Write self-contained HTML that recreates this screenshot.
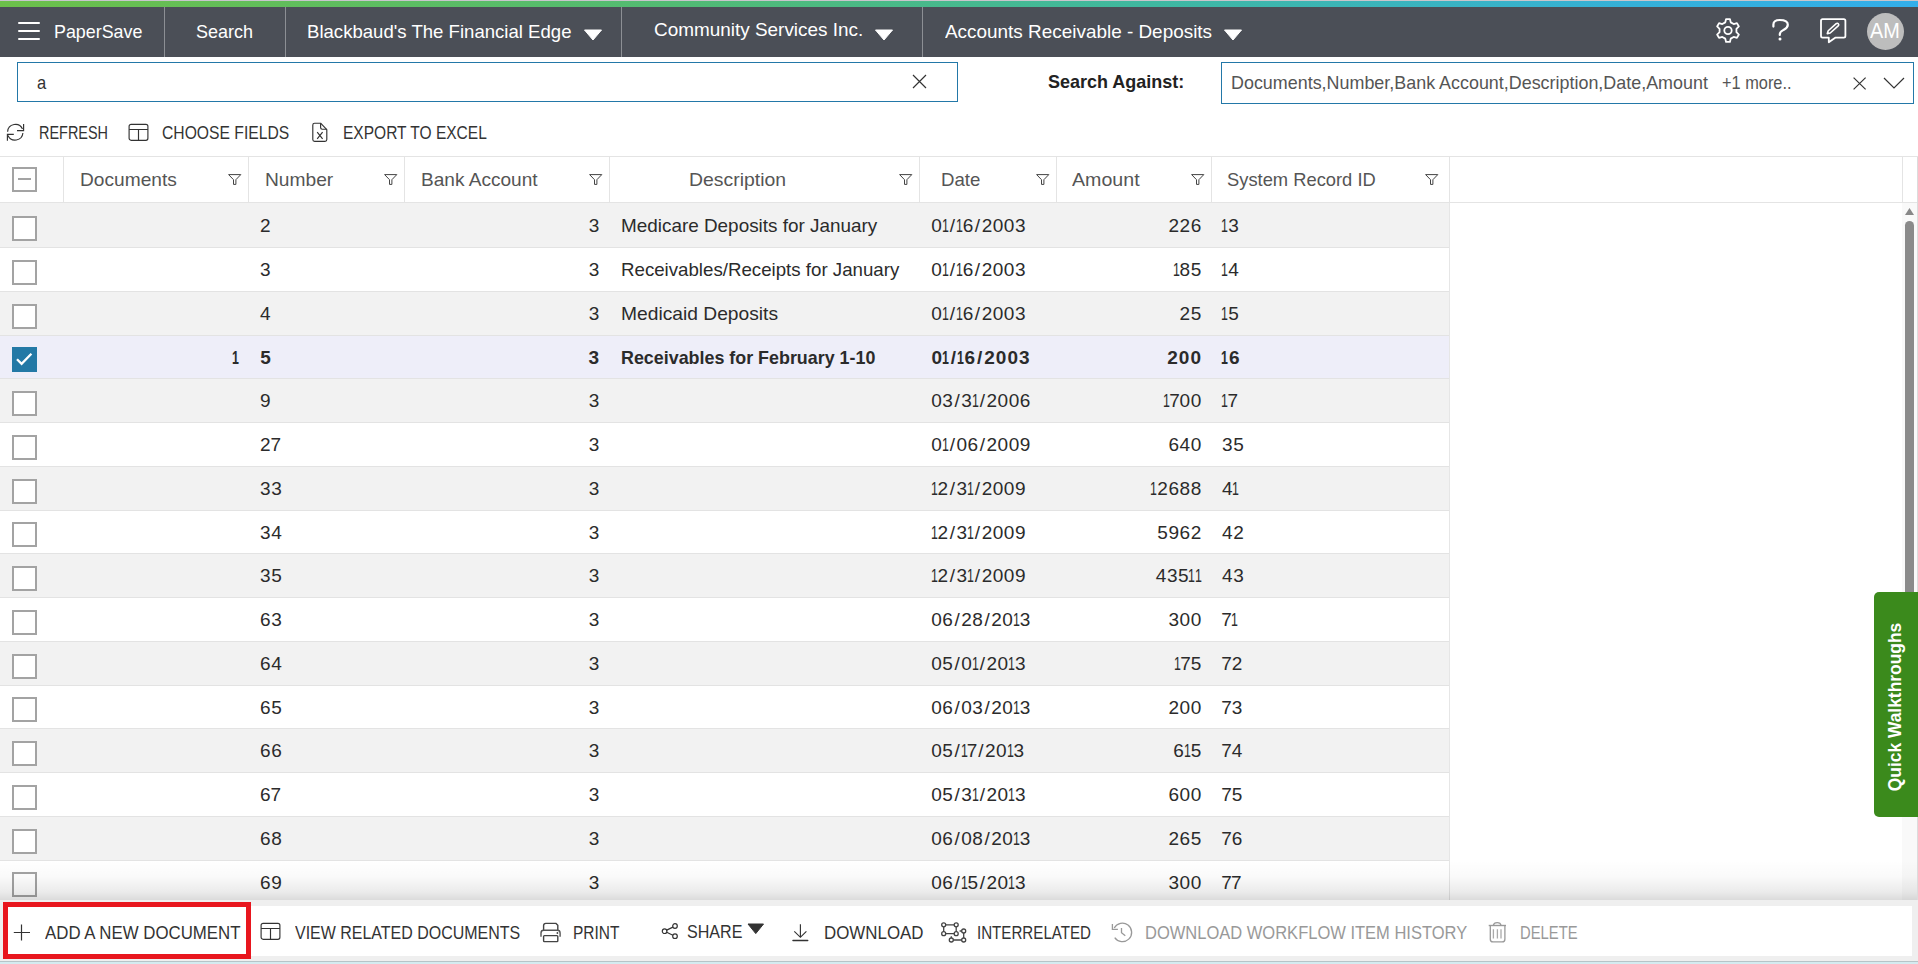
<!DOCTYPE html>
<html><head><meta charset="utf-8"><title>PaperSave</title>
<style>
html,body{margin:0;padding:0;width:1918px;height:964px;overflow:hidden;background:#fff;font-family:"Liberation Sans",sans-serif;}
.t{position:absolute;white-space:nowrap;transform-origin:0 0;}
svg{overflow:visible}
</style></head><body>
<div style="position:absolute;left:0px;top:0px;width:1918px;height:1px;background:#c8c6cc"></div>
<div style="position:absolute;left:0px;top:1px;width:1918px;height:6px;background:linear-gradient(90deg,#6cc04a 0%,#52bb73 35%,#3fb8a0 60%,#35b0d8 85%,#33aeea 100%)"></div>
<div style="position:absolute;left:0px;top:7px;width:1918px;height:50px;background:#4b4f57"></div>
<div style="position:absolute;left:164px;top:7px;width:1px;height:50px;background:#8c8f94"></div>
<div style="position:absolute;left:285px;top:7px;width:1px;height:50px;background:#8c8f94"></div>
<div style="position:absolute;left:621px;top:7px;width:1px;height:50px;background:#8c8f94"></div>
<div style="position:absolute;left:922px;top:7px;width:1px;height:50px;background:#8c8f94"></div>
<div style="position:absolute;left:18px;top:21.5px;width:22px;height:2px;background:#fff;border-radius:1px"></div>
<div style="position:absolute;left:18px;top:29.5px;width:22px;height:2px;background:#fff;border-radius:1px"></div>
<div style="position:absolute;left:18px;top:37.5px;width:22px;height:2px;background:#fff;border-radius:1px"></div>
<div class="t" style="left:53.60px;top:22px;font-size:19px;line-height:19px;color:#ffffff;transform:scaleX(0.9406);">PaperSave</div>
<div class="t" style="left:196.00px;top:22px;font-size:19px;line-height:19px;color:#ffffff;transform:scaleX(0.9470);">Search</div>
<div class="t" style="left:307.30px;top:22px;font-size:19px;line-height:19px;color:#ffffff;transform:scaleX(0.9777);">Blackbaud's The Financial Edge</div>
<div class="t" style="left:653.75px;top:20px;font-size:19px;line-height:19px;color:#ffffff;transform:scaleX(0.9960);">Community Services Inc.</div>
<div class="t" style="left:945.00px;top:22px;font-size:19px;line-height:19px;color:#ffffff;transform:scaleX(0.9956);">Accounts Receivable - Deposits</div>
<svg style="position:absolute;left:583.75px;top:29px;" width="18" height="12" viewBox="0 0 18 12"><path d="M0.5 1 L17.5 1 L9 11 Z" fill="#fff" stroke="#fff" stroke-width="1" stroke-linejoin="round"/></svg>
<svg style="position:absolute;left:875px;top:29px;" width="18" height="12" viewBox="0 0 18 12"><path d="M0.5 1 L17.5 1 L9 11 Z" fill="#fff" stroke="#fff" stroke-width="1" stroke-linejoin="round"/></svg>
<svg style="position:absolute;left:1224px;top:29px;" width="18" height="12" viewBox="0 0 18 12"><path d="M0.5 1 L17.5 1 L9 11 Z" fill="#fff" stroke="#fff" stroke-width="1" stroke-linejoin="round"/></svg>
<svg style="position:absolute;left:1712px;top:14px;" width="32" height="34" viewBox="0 0 32 34"><path d="M13.26 8.35 L14.07 5.06 L17.93 5.06 L18.74 8.35 L21.69 10.05 L24.94 9.11 L26.87 12.46 L24.43 14.80 L24.43 18.20 L26.87 20.54 L24.94 23.89 L21.69 22.95 L18.74 24.65 L17.93 27.94 L14.07 27.94 L13.26 24.65 L10.31 22.95 L7.06 23.89 L5.13 20.54 L7.57 18.20 L7.57 14.80 L5.13 12.46 L7.06 9.11 L10.31 10.05 Z" fill="none" stroke="#fff" stroke-width="1.8" stroke-linejoin="round"/><circle cx="16" cy="16.5" r="3.7" fill="none" stroke="#fff" stroke-width="1.8"/></svg>
<svg style="position:absolute;left:1766px;top:14px;" width="28" height="32" viewBox="0 0 28 32"><path d="M7.4 12.6 V10.5 C7.4 7.2 9.5 6 13.8 6 C18.5 6 21.8 7.5 21.8 10.8 C21.8 14 19.5 14.8 16.8 16.4 C14.6 17.6 13.8 18.4 13.8 20.2 V21" fill="none" stroke="#fff" stroke-width="2.2" stroke-linecap="round"/><circle cx="14" cy="25" r="1.5" fill="#fff"/></svg>
<svg style="position:absolute;left:1816px;top:14px;" width="34" height="32" viewBox="0 0 34 32"><path d="M6.6 5.2 H27.8 Q29.4 5.2 29.4 6.8 V22.1 Q29.4 23.7 27.8 23.7 H19.2 L12.8 28.3 V23.7 H6.6 Q5 23.7 5 22.1 V6.8 Q5 5.2 6.6 5.2 Z" fill="none" stroke="#fff" stroke-width="1.8" stroke-linejoin="round"/><path d="M11.3 19.6 L12.23 16.74 L20.2 9.58 A1.5 1.5 0 0 1 22.2 11.82 L14.23 18.98 Z" fill="none" stroke="#fff" stroke-width="1.6" stroke-linejoin="round"/></svg>
<div style="position:absolute;left:1867px;top:12.8px;width:37px;height:37px;background:#bdbdbd;border-radius:50%"></div>
<div class="t" style="left:1870.20px;top:20px;font-size:22px;line-height:22px;color:#ffffff;transform:scaleX(0.9030);">AM</div>
<div style="position:absolute;left:17px;top:62px;width:941px;height:40px;box-sizing:border-box;border:1.5px solid #2378a8;background:#fff"></div>
<div class="t" style="left:37.20px;top:73px;font-size:19px;line-height:19px;color:#333;transform:scaleX(0.8710);">a</div>
<svg style="position:absolute;left:911px;top:73px;" width="17" height="17" viewBox="0 0 17 17"><path d="M2 2 L15 15 M15 2 L2 15" stroke="#333" stroke-width="1.2"/></svg>
<div class="t" style="left:1047.50px;top:72px;font-size:19px;line-height:19px;color:#222;font-weight:bold;transform:scaleX(0.9462);">Search Against:</div>
<div style="position:absolute;left:1221px;top:62px;width:693px;height:42px;box-sizing:border-box;border:1.5px solid #2378a8;background:#fff"></div>
<div class="t" style="left:1230.60px;top:72.8px;font-size:19px;line-height:19px;color:#555;transform:scaleX(0.9427);">Documents,Number,Bank Account,Description,Date,Amount</div>
<div class="t" style="left:1722.00px;top:72.8px;font-size:19px;line-height:19px;color:#555;transform:scaleX(0.8603);">+1 more..</div>
<svg style="position:absolute;left:1852px;top:76px;" width="16" height="15" viewBox="0 0 16 15"><path d="M1.6 1.6 L13.6 13.4 M13.6 1.6 L1.6 13.4" stroke="#333" stroke-width="1.2"/></svg>
<svg style="position:absolute;left:1882px;top:76px;" width="24" height="14" viewBox="0 0 24 14"><path d="M2 2 L12 12 L22 2" fill="none" stroke="#333" stroke-width="1.2"/></svg>
<svg style="position:absolute;left:4px;top:120px;" width="24" height="24" viewBox="0 0 24 24"><path d="M3.6 11.7 A7.8 7.8 0 0 1 18.5 9" fill="none" stroke="#333" stroke-width="1.15"/><path d="M19.6 4 V10.6 H13" fill="none" stroke="#333" stroke-width="1.15"/><path d="M18.9 13 A7.8 7.8 0 0 1 4 15.4" fill="none" stroke="#333" stroke-width="1.15"/><path d="M3.4 20.8 V14.4 H9.8" fill="none" stroke="#333" stroke-width="1.15"/></svg>
<div class="t" style="left:39.00px;top:123px;font-size:19px;line-height:19px;color:#333;transform:scaleX(0.7601);">REFRESH</div>
<svg style="position:absolute;left:128px;top:123px;" width="24" height="20" viewBox="0 0 24 20"><rect x="1.1" y="1.3" width="18.8" height="16" rx="2" fill="none" stroke="#333" stroke-width="1.15"/><path d="M1.1 6.5 H19.9 M10.5 6.5 V17.3" stroke="#333" stroke-width="1.15"/></svg>
<div class="t" style="left:161.50px;top:123px;font-size:19px;line-height:19px;color:#333;transform:scaleX(0.8252);">CHOOSE FIELDS</div>
<svg style="position:absolute;left:310px;top:121px;" width="20" height="24" viewBox="0 0 20 24"><path d="M4.6 2.2 H10.6 L16.8 8.6 V18.6 Q16.8 20.4 15 20.4 H4.6 Q2.8 20.4 2.8 18.6 V4 Q2.8 2.2 4.6 2.2 Z" fill="none" stroke="#333" stroke-width="1.15" stroke-linejoin="round"/><path d="M10.6 2.2 V6.6 Q10.6 8.2 12.2 8.2 H16.8" fill="none" stroke="#333" stroke-width="1.15"/><path d="M7.2 11.2 L12.6 17.8 M12.6 11.2 L7.2 17.8" stroke="#333" stroke-width="1.2"/></svg>
<div class="t" style="left:342.70px;top:123px;font-size:19px;line-height:19px;color:#333;transform:scaleX(0.8170);">EXPORT TO EXCEL</div>
<div style="position:absolute;left:0px;top:156px;width:1918px;height:1px;background:#e4e4e4"></div>
<div style="position:absolute;left:0px;top:157px;width:1918px;height:45px;background:#fff"></div>
<div style="position:absolute;left:0px;top:202px;width:1918px;height:1px;background:#e4e4e4"></div>
<div style="position:absolute;left:63px;top:157px;width:1px;height:45px;background:#e4e4e4"></div>
<div style="position:absolute;left:248px;top:157px;width:1px;height:45px;background:#e4e4e4"></div>
<div style="position:absolute;left:404px;top:157px;width:1px;height:45px;background:#e4e4e4"></div>
<div style="position:absolute;left:609px;top:157px;width:1px;height:45px;background:#e4e4e4"></div>
<div style="position:absolute;left:919px;top:157px;width:1px;height:45px;background:#e4e4e4"></div>
<div style="position:absolute;left:1056px;top:157px;width:1px;height:45px;background:#e4e4e4"></div>
<div style="position:absolute;left:1211px;top:157px;width:1px;height:45px;background:#e4e4e4"></div>
<div style="position:absolute;left:1449px;top:157px;width:1px;height:45px;background:#e4e4e4"></div>
<div style="position:absolute;left:1902px;top:157px;width:1px;height:45px;background:#e4e4e4"></div>
<div style="position:absolute;left:1917px;top:157px;width:1px;height:743px;background:#dcdcdc"></div>
<div style="position:absolute;left:12px;top:167px;width:25px;height:25px;box-sizing:border-box;border:2px solid #a3a3a3;background:#fff"></div>
<div style="position:absolute;left:18px;top:178px;width:13px;height:2px;background:#a3a3a3"></div>
<div class="t" style="left:80.20px;top:170px;font-size:19px;line-height:19px;color:#555;transform:scaleX(1.0075);">Documents</div>
<div class="t" style="left:265.00px;top:170px;font-size:19px;line-height:19px;color:#555;transform:scaleX(1.0094);">Number</div>
<div class="t" style="left:421.40px;top:170px;font-size:19px;line-height:19px;color:#555;transform:scaleX(1.0037);">Bank Account</div>
<div class="t" style="left:688.60px;top:170px;font-size:19px;line-height:19px;color:#555;transform:scaleX(1.0209);">Description</div>
<div class="t" style="left:940.60px;top:170px;font-size:19px;line-height:19px;color:#555;transform:scaleX(0.9819);">Date</div>
<div class="t" style="left:1072.00px;top:170px;font-size:19px;line-height:19px;color:#555;transform:scaleX(1.0326);">Amount</div>
<div class="t" style="left:1226.60px;top:170px;font-size:19px;line-height:19px;color:#555;transform:scaleX(0.9647);">System Record ID</div>
<svg style="position:absolute;left:227.6px;top:172px;" width="14" height="14" viewBox="0 0 14 14"><path d="M0.6 2.6 H12.8 L7.9 7.7 V12.4 H5.5 V7.7 Z" fill="none" stroke="#444" stroke-width="1" stroke-linejoin="miter"/></svg>
<svg style="position:absolute;left:383.9px;top:172px;" width="14" height="14" viewBox="0 0 14 14"><path d="M0.6 2.6 H12.8 L7.9 7.7 V12.4 H5.5 V7.7 Z" fill="none" stroke="#444" stroke-width="1" stroke-linejoin="miter"/></svg>
<svg style="position:absolute;left:588.7px;top:172px;" width="14" height="14" viewBox="0 0 14 14"><path d="M0.6 2.6 H12.8 L7.9 7.7 V12.4 H5.5 V7.7 Z" fill="none" stroke="#444" stroke-width="1" stroke-linejoin="miter"/></svg>
<svg style="position:absolute;left:899px;top:172px;" width="14" height="14" viewBox="0 0 14 14"><path d="M0.6 2.6 H12.8 L7.9 7.7 V12.4 H5.5 V7.7 Z" fill="none" stroke="#444" stroke-width="1" stroke-linejoin="miter"/></svg>
<svg style="position:absolute;left:1035.5px;top:172px;" width="14" height="14" viewBox="0 0 14 14"><path d="M0.6 2.6 H12.8 L7.9 7.7 V12.4 H5.5 V7.7 Z" fill="none" stroke="#444" stroke-width="1" stroke-linejoin="miter"/></svg>
<svg style="position:absolute;left:1190.6px;top:172px;" width="14" height="14" viewBox="0 0 14 14"><path d="M0.6 2.6 H12.8 L7.9 7.7 V12.4 H5.5 V7.7 Z" fill="none" stroke="#444" stroke-width="1" stroke-linejoin="miter"/></svg>
<svg style="position:absolute;left:1425px;top:172px;" width="14" height="14" viewBox="0 0 14 14"><path d="M0.6 2.6 H12.8 L7.9 7.7 V12.4 H5.5 V7.7 Z" fill="none" stroke="#444" stroke-width="1" stroke-linejoin="miter"/></svg>
<div style="position:absolute;left:1449px;top:203px;width:453px;height:697px;background:#fff"></div>
<div style="position:absolute;left:1449px;top:203px;width:1px;height:697px;background:#e6e6e6"></div>
<div style="position:absolute;left:1902px;top:203px;width:15px;height:697px;background:#f9f9f9"></div>
<div style="position:absolute;left:0px;top:203px;width:1449px;height:44px;background:#f2f2f2"></div>
<div style="position:absolute;left:0px;top:247px;width:1449px;height:1px;background:#e3e3e3"></div>
<div style="position:absolute;left:12px;top:216px;width:25px;height:25px;box-sizing:border-box;border:2px solid #a3a3a3;background:#fff"></div>
<div class="t" style="left:259.80px;top:216.0px;font-size:19px;line-height:19px;color:#2b2b2b;"><span style="position:absolute;left:0.27px;top:0;">2</span></div>
<div class="t" style="left:588.40px;top:216.0px;font-size:19px;line-height:19px;color:#2b2b2b;"><span style="position:absolute;left:0.27px;top:0;">3</span></div>
<div class="t" style="left:620.80px;top:216.0px;font-size:19px;line-height:19px;color:#2b2b2b;transform:scaleX(0.9945);">Medicare Deposits for January</div>
<div class="t" style="left:931.00px;top:216.0px;font-size:19px;line-height:19px;color:#2b2b2b;"><span style="position:absolute;left:0.27px;top:0;">0</span><span style="position:absolute;left:8.70px;top:0;transform:scaleX(0.65);transform-origin:5.55px 0;">1</span><span style="position:absolute;left:18.66px;top:0;">/</span><span style="position:absolute;left:22.80px;top:0;transform:scaleX(0.65);transform-origin:5.55px 0;">1</span><span style="position:absolute;left:31.77px;top:0;">6</span><span style="position:absolute;left:43.86px;top:0;">/</span><span style="position:absolute;left:50.67px;top:0;">2</span><span style="position:absolute;left:61.77px;top:0;">0</span><span style="position:absolute;left:72.87px;top:0;">0</span><span style="position:absolute;left:83.97px;top:0;">3</span></div>
<div class="t" style="left:1168.20px;top:216.0px;font-size:19px;line-height:19px;color:#2b2b2b;"><span style="position:absolute;left:0.27px;top:0;">2</span><span style="position:absolute;left:11.37px;top:0;">2</span><span style="position:absolute;left:22.47px;top:0;">6</span></div>
<div class="t" style="left:1221.80px;top:216.0px;font-size:19px;line-height:19px;color:#2b2b2b;"><span style="position:absolute;left:-2.40px;top:0;transform:scaleX(0.65);transform-origin:5.55px 0;">1</span><span style="position:absolute;left:6.57px;top:0;">3</span></div>
<div style="position:absolute;left:0px;top:248px;width:1449px;height:43px;background:#ffffff"></div>
<div style="position:absolute;left:0px;top:291px;width:1449px;height:1px;background:#e3e3e3"></div>
<div style="position:absolute;left:12px;top:260px;width:25px;height:25px;box-sizing:border-box;border:2px solid #a3a3a3;background:#fff"></div>
<div class="t" style="left:259.80px;top:260.0px;font-size:19px;line-height:19px;color:#2b2b2b;"><span style="position:absolute;left:0.27px;top:0;">3</span></div>
<div class="t" style="left:588.40px;top:260.0px;font-size:19px;line-height:19px;color:#2b2b2b;"><span style="position:absolute;left:0.27px;top:0;">3</span></div>
<div class="t" style="left:620.80px;top:260.0px;font-size:19px;line-height:19px;color:#2b2b2b;transform:scaleX(0.9831);">Receivables/Receipts for January</div>
<div class="t" style="left:931.00px;top:260.0px;font-size:19px;line-height:19px;color:#2b2b2b;"><span style="position:absolute;left:0.27px;top:0;">0</span><span style="position:absolute;left:8.70px;top:0;transform:scaleX(0.65);transform-origin:5.55px 0;">1</span><span style="position:absolute;left:18.66px;top:0;">/</span><span style="position:absolute;left:22.80px;top:0;transform:scaleX(0.65);transform-origin:5.55px 0;">1</span><span style="position:absolute;left:31.77px;top:0;">6</span><span style="position:absolute;left:43.86px;top:0;">/</span><span style="position:absolute;left:50.67px;top:0;">2</span><span style="position:absolute;left:61.77px;top:0;">0</span><span style="position:absolute;left:72.87px;top:0;">0</span><span style="position:absolute;left:83.97px;top:0;">3</span></div>
<div class="t" style="left:1173.00px;top:260.0px;font-size:19px;line-height:19px;color:#2b2b2b;"><span style="position:absolute;left:-2.40px;top:0;transform:scaleX(0.65);transform-origin:5.55px 0;">1</span><span style="position:absolute;left:6.57px;top:0;">8</span><span style="position:absolute;left:17.67px;top:0;">5</span></div>
<div class="t" style="left:1221.80px;top:260.0px;font-size:19px;line-height:19px;color:#2b2b2b;"><span style="position:absolute;left:-2.40px;top:0;transform:scaleX(0.65);transform-origin:5.55px 0;">1</span><span style="position:absolute;left:6.57px;top:0;">4</span></div>
<div style="position:absolute;left:0px;top:292px;width:1449px;height:43px;background:#f2f2f2"></div>
<div style="position:absolute;left:0px;top:335px;width:1449px;height:1px;background:#e3e3e3"></div>
<div style="position:absolute;left:12px;top:304px;width:25px;height:25px;box-sizing:border-box;border:2px solid #a3a3a3;background:#fff"></div>
<div class="t" style="left:259.80px;top:304.0px;font-size:19px;line-height:19px;color:#2b2b2b;"><span style="position:absolute;left:0.27px;top:0;">4</span></div>
<div class="t" style="left:588.40px;top:304.0px;font-size:19px;line-height:19px;color:#2b2b2b;"><span style="position:absolute;left:0.27px;top:0;">3</span></div>
<div class="t" style="left:620.80px;top:304.0px;font-size:19px;line-height:19px;color:#2b2b2b;transform:scaleX(1.0116);">Medicaid Deposits</div>
<div class="t" style="left:931.00px;top:304.0px;font-size:19px;line-height:19px;color:#2b2b2b;"><span style="position:absolute;left:0.27px;top:0;">0</span><span style="position:absolute;left:8.70px;top:0;transform:scaleX(0.65);transform-origin:5.55px 0;">1</span><span style="position:absolute;left:18.66px;top:0;">/</span><span style="position:absolute;left:22.80px;top:0;transform:scaleX(0.65);transform-origin:5.55px 0;">1</span><span style="position:absolute;left:31.77px;top:0;">6</span><span style="position:absolute;left:43.86px;top:0;">/</span><span style="position:absolute;left:50.67px;top:0;">2</span><span style="position:absolute;left:61.77px;top:0;">0</span><span style="position:absolute;left:72.87px;top:0;">0</span><span style="position:absolute;left:83.97px;top:0;">3</span></div>
<div class="t" style="left:1179.30px;top:304.0px;font-size:19px;line-height:19px;color:#2b2b2b;"><span style="position:absolute;left:0.27px;top:0;">2</span><span style="position:absolute;left:11.37px;top:0;">5</span></div>
<div class="t" style="left:1221.80px;top:304.0px;font-size:19px;line-height:19px;color:#2b2b2b;"><span style="position:absolute;left:-2.40px;top:0;transform:scaleX(0.65);transform-origin:5.55px 0;">1</span><span style="position:absolute;left:6.57px;top:0;">5</span></div>
<div style="position:absolute;left:0px;top:336px;width:1449px;height:42px;background:#eeeef9"></div>
<div style="position:absolute;left:0px;top:378px;width:1449px;height:1px;background:#e3e3e3"></div>
<div style="position:absolute;left:12px;top:347px;width:25px;height:25px;background:#2379a6"></div>
<svg style="position:absolute;left:12px;top:347px;" width="25" height="25" viewBox="0 0 25 25"><path d="M5 12.2 L9.6 16.8 L19.4 6.8" fill="none" stroke="#fff" stroke-width="2.3"/></svg>
<div class="t" style="left:231.91px;top:347.5px;font-size:19px;line-height:19px;color:#2b2b2b;font-weight:bold;"><span style="position:absolute;left:-2.33px;top:0;transform:scaleX(0.65);transform-origin:5.62px 0;">1</span></div>
<div class="t" style="left:259.80px;top:347.5px;font-size:19px;line-height:19px;color:#2b2b2b;font-weight:bold;"><span style="position:absolute;left:0.53px;top:0;">5</span></div>
<div class="t" style="left:587.89px;top:347.5px;font-size:19px;line-height:19px;color:#2b2b2b;font-weight:bold;"><span style="position:absolute;left:0.53px;top:0;">3</span></div>
<div class="t" style="left:620.80px;top:347.5px;font-size:19px;line-height:19px;color:#2b2b2b;font-weight:bold;transform:scaleX(0.9408);">Receivables for February 1-10</div>
<div class="t" style="left:931.00px;top:347.5px;font-size:19px;line-height:19px;color:#2b2b2b;font-weight:bold;"><span style="position:absolute;left:0.53px;top:0;">0</span><span style="position:absolute;left:9.29px;top:0;transform:scaleX(0.65);transform-origin:5.62px 0;">1</span><span style="position:absolute;left:19.64px;top:0;">/</span><span style="position:absolute;left:24.03px;top:0;transform:scaleX(0.65);transform-origin:5.62px 0;">1</span><span style="position:absolute;left:33.47px;top:0;">6</span><span style="position:absolute;left:46.00px;top:0;">/</span><span style="position:absolute;left:53.24px;top:0;">2</span><span style="position:absolute;left:64.85px;top:0;">0</span><span style="position:absolute;left:76.46px;top:0;">0</span><span style="position:absolute;left:88.08px;top:0;">3</span></div>
<div class="t" style="left:1166.67px;top:347.5px;font-size:19px;line-height:19px;color:#2b2b2b;font-weight:bold;"><span style="position:absolute;left:0.53px;top:0;">2</span><span style="position:absolute;left:12.14px;top:0;">0</span><span style="position:absolute;left:23.75px;top:0;">0</span></div>
<div class="t" style="left:1221.80px;top:347.5px;font-size:19px;line-height:19px;color:#2b2b2b;font-weight:bold;"><span style="position:absolute;left:-2.33px;top:0;transform:scaleX(0.65);transform-origin:5.62px 0;">1</span><span style="position:absolute;left:7.12px;top:0;">6</span></div>
<div style="position:absolute;left:0px;top:379px;width:1449px;height:43px;background:#f2f2f2"></div>
<div style="position:absolute;left:0px;top:422px;width:1449px;height:1px;background:#e3e3e3"></div>
<div style="position:absolute;left:12px;top:391px;width:25px;height:25px;box-sizing:border-box;border:2px solid #a3a3a3;background:#fff"></div>
<div class="t" style="left:259.80px;top:391.0px;font-size:19px;line-height:19px;color:#2b2b2b;"><span style="position:absolute;left:0.27px;top:0;">9</span></div>
<div class="t" style="left:588.40px;top:391.0px;font-size:19px;line-height:19px;color:#2b2b2b;"><span style="position:absolute;left:0.27px;top:0;">3</span></div>
<div class="t" style="left:931.00px;top:391.0px;font-size:19px;line-height:19px;color:#2b2b2b;"><span style="position:absolute;left:0.27px;top:0;">0</span><span style="position:absolute;left:11.37px;top:0;">3</span><span style="position:absolute;left:23.46px;top:0;">/</span><span style="position:absolute;left:30.27px;top:0;">3</span><span style="position:absolute;left:38.70px;top:0;transform:scaleX(0.65);transform-origin:5.55px 0;">1</span><span style="position:absolute;left:48.66px;top:0;">/</span><span style="position:absolute;left:55.47px;top:0;">2</span><span style="position:absolute;left:66.57px;top:0;">0</span><span style="position:absolute;left:77.67px;top:0;">0</span><span style="position:absolute;left:88.77px;top:0;">6</span></div>
<div class="t" style="left:1163.40px;top:391.0px;font-size:19px;line-height:19px;color:#2b2b2b;"><span style="position:absolute;left:-2.40px;top:0;transform:scaleX(0.65);transform-origin:5.55px 0;">1</span><span style="position:absolute;left:5.82px;top:0;">7</span><span style="position:absolute;left:16.17px;top:0;">0</span><span style="position:absolute;left:27.27px;top:0;">0</span></div>
<div class="t" style="left:1221.80px;top:391.0px;font-size:19px;line-height:19px;color:#2b2b2b;"><span style="position:absolute;left:-2.40px;top:0;transform:scaleX(0.65);transform-origin:5.55px 0;">1</span><span style="position:absolute;left:5.82px;top:0;">7</span></div>
<div style="position:absolute;left:0px;top:423px;width:1449px;height:43px;background:#ffffff"></div>
<div style="position:absolute;left:0px;top:466px;width:1449px;height:1px;background:#e3e3e3"></div>
<div style="position:absolute;left:12px;top:435px;width:25px;height:25px;box-sizing:border-box;border:2px solid #a3a3a3;background:#fff"></div>
<div class="t" style="left:259.80px;top:435.0px;font-size:19px;line-height:19px;color:#2b2b2b;"><span style="position:absolute;left:0.27px;top:0;">2</span><span style="position:absolute;left:10.62px;top:0;">7</span></div>
<div class="t" style="left:588.40px;top:435.0px;font-size:19px;line-height:19px;color:#2b2b2b;"><span style="position:absolute;left:0.27px;top:0;">3</span></div>
<div class="t" style="left:931.00px;top:435.0px;font-size:19px;line-height:19px;color:#2b2b2b;"><span style="position:absolute;left:0.27px;top:0;">0</span><span style="position:absolute;left:8.70px;top:0;transform:scaleX(0.65);transform-origin:5.55px 0;">1</span><span style="position:absolute;left:18.66px;top:0;">/</span><span style="position:absolute;left:25.47px;top:0;">0</span><span style="position:absolute;left:36.57px;top:0;">6</span><span style="position:absolute;left:48.66px;top:0;">/</span><span style="position:absolute;left:55.47px;top:0;">2</span><span style="position:absolute;left:66.57px;top:0;">0</span><span style="position:absolute;left:77.67px;top:0;">0</span><span style="position:absolute;left:88.77px;top:0;">9</span></div>
<div class="t" style="left:1168.20px;top:435.0px;font-size:19px;line-height:19px;color:#2b2b2b;"><span style="position:absolute;left:0.27px;top:0;">6</span><span style="position:absolute;left:11.37px;top:0;">4</span><span style="position:absolute;left:22.47px;top:0;">0</span></div>
<div class="t" style="left:1221.80px;top:435.0px;font-size:19px;line-height:19px;color:#2b2b2b;"><span style="position:absolute;left:0.27px;top:0;">3</span><span style="position:absolute;left:11.37px;top:0;">5</span></div>
<div style="position:absolute;left:0px;top:467px;width:1449px;height:43px;background:#f2f2f2"></div>
<div style="position:absolute;left:0px;top:510px;width:1449px;height:1px;background:#e3e3e3"></div>
<div style="position:absolute;left:12px;top:479px;width:25px;height:25px;box-sizing:border-box;border:2px solid #a3a3a3;background:#fff"></div>
<div class="t" style="left:259.80px;top:479.0px;font-size:19px;line-height:19px;color:#2b2b2b;"><span style="position:absolute;left:0.27px;top:0;">3</span><span style="position:absolute;left:11.37px;top:0;">3</span></div>
<div class="t" style="left:588.40px;top:479.0px;font-size:19px;line-height:19px;color:#2b2b2b;"><span style="position:absolute;left:0.27px;top:0;">3</span></div>
<div class="t" style="left:931.00px;top:479.0px;font-size:19px;line-height:19px;color:#2b2b2b;"><span style="position:absolute;left:-2.40px;top:0;transform:scaleX(0.65);transform-origin:5.55px 0;">1</span><span style="position:absolute;left:6.57px;top:0;">2</span><span style="position:absolute;left:18.66px;top:0;">/</span><span style="position:absolute;left:25.47px;top:0;">3</span><span style="position:absolute;left:33.90px;top:0;transform:scaleX(0.65);transform-origin:5.55px 0;">1</span><span style="position:absolute;left:43.86px;top:0;">/</span><span style="position:absolute;left:50.67px;top:0;">2</span><span style="position:absolute;left:61.77px;top:0;">0</span><span style="position:absolute;left:72.87px;top:0;">0</span><span style="position:absolute;left:83.97px;top:0;">9</span></div>
<div class="t" style="left:1150.80px;top:479.0px;font-size:19px;line-height:19px;color:#2b2b2b;"><span style="position:absolute;left:-2.40px;top:0;transform:scaleX(0.65);transform-origin:5.55px 0;">1</span><span style="position:absolute;left:6.57px;top:0;">2</span><span style="position:absolute;left:17.67px;top:0;">6</span><span style="position:absolute;left:28.77px;top:0;">8</span><span style="position:absolute;left:39.87px;top:0;">8</span></div>
<div class="t" style="left:1221.80px;top:479.0px;font-size:19px;line-height:19px;color:#2b2b2b;"><span style="position:absolute;left:0.27px;top:0;">4</span><span style="position:absolute;left:8.70px;top:0;transform:scaleX(0.65);transform-origin:5.55px 0;">1</span></div>
<div style="position:absolute;left:0px;top:511px;width:1449px;height:42px;background:#ffffff"></div>
<div style="position:absolute;left:0px;top:553px;width:1449px;height:1px;background:#e3e3e3"></div>
<div style="position:absolute;left:12px;top:522px;width:25px;height:25px;box-sizing:border-box;border:2px solid #a3a3a3;background:#fff"></div>
<div class="t" style="left:259.80px;top:522.5px;font-size:19px;line-height:19px;color:#2b2b2b;"><span style="position:absolute;left:0.27px;top:0;">3</span><span style="position:absolute;left:11.37px;top:0;">4</span></div>
<div class="t" style="left:588.40px;top:522.5px;font-size:19px;line-height:19px;color:#2b2b2b;"><span style="position:absolute;left:0.27px;top:0;">3</span></div>
<div class="t" style="left:931.00px;top:522.5px;font-size:19px;line-height:19px;color:#2b2b2b;"><span style="position:absolute;left:-2.40px;top:0;transform:scaleX(0.65);transform-origin:5.55px 0;">1</span><span style="position:absolute;left:6.57px;top:0;">2</span><span style="position:absolute;left:18.66px;top:0;">/</span><span style="position:absolute;left:25.47px;top:0;">3</span><span style="position:absolute;left:33.90px;top:0;transform:scaleX(0.65);transform-origin:5.55px 0;">1</span><span style="position:absolute;left:43.86px;top:0;">/</span><span style="position:absolute;left:50.67px;top:0;">2</span><span style="position:absolute;left:61.77px;top:0;">0</span><span style="position:absolute;left:72.87px;top:0;">0</span><span style="position:absolute;left:83.97px;top:0;">9</span></div>
<div class="t" style="left:1157.10px;top:522.5px;font-size:19px;line-height:19px;color:#2b2b2b;"><span style="position:absolute;left:0.27px;top:0;">5</span><span style="position:absolute;left:11.37px;top:0;">9</span><span style="position:absolute;left:22.47px;top:0;">6</span><span style="position:absolute;left:33.57px;top:0;">2</span></div>
<div class="t" style="left:1221.80px;top:522.5px;font-size:19px;line-height:19px;color:#2b2b2b;"><span style="position:absolute;left:0.27px;top:0;">4</span><span style="position:absolute;left:11.37px;top:0;">2</span></div>
<div style="position:absolute;left:0px;top:554px;width:1449px;height:43px;background:#f2f2f2"></div>
<div style="position:absolute;left:0px;top:597px;width:1449px;height:1px;background:#e3e3e3"></div>
<div style="position:absolute;left:12px;top:566px;width:25px;height:25px;box-sizing:border-box;border:2px solid #a3a3a3;background:#fff"></div>
<div class="t" style="left:259.80px;top:566.0px;font-size:19px;line-height:19px;color:#2b2b2b;"><span style="position:absolute;left:0.27px;top:0;">3</span><span style="position:absolute;left:11.37px;top:0;">5</span></div>
<div class="t" style="left:588.40px;top:566.0px;font-size:19px;line-height:19px;color:#2b2b2b;"><span style="position:absolute;left:0.27px;top:0;">3</span></div>
<div class="t" style="left:931.00px;top:566.0px;font-size:19px;line-height:19px;color:#2b2b2b;"><span style="position:absolute;left:-2.40px;top:0;transform:scaleX(0.65);transform-origin:5.55px 0;">1</span><span style="position:absolute;left:6.57px;top:0;">2</span><span style="position:absolute;left:18.66px;top:0;">/</span><span style="position:absolute;left:25.47px;top:0;">3</span><span style="position:absolute;left:33.90px;top:0;transform:scaleX(0.65);transform-origin:5.55px 0;">1</span><span style="position:absolute;left:43.86px;top:0;">/</span><span style="position:absolute;left:50.67px;top:0;">2</span><span style="position:absolute;left:61.77px;top:0;">0</span><span style="position:absolute;left:72.87px;top:0;">0</span><span style="position:absolute;left:83.97px;top:0;">9</span></div>
<div class="t" style="left:1155.60px;top:566.0px;font-size:19px;line-height:19px;color:#2b2b2b;"><span style="position:absolute;left:0.27px;top:0;">4</span><span style="position:absolute;left:11.37px;top:0;">3</span><span style="position:absolute;left:22.47px;top:0;">5</span><span style="position:absolute;left:30.90px;top:0;transform:scaleX(0.65);transform-origin:5.55px 0;">1</span><span style="position:absolute;left:37.20px;top:0;transform:scaleX(0.65);transform-origin:5.55px 0;">1</span></div>
<div class="t" style="left:1221.80px;top:566.0px;font-size:19px;line-height:19px;color:#2b2b2b;"><span style="position:absolute;left:0.27px;top:0;">4</span><span style="position:absolute;left:11.37px;top:0;">3</span></div>
<div style="position:absolute;left:0px;top:598px;width:1449px;height:43px;background:#ffffff"></div>
<div style="position:absolute;left:0px;top:641px;width:1449px;height:1px;background:#e3e3e3"></div>
<div style="position:absolute;left:12px;top:610px;width:25px;height:25px;box-sizing:border-box;border:2px solid #a3a3a3;background:#fff"></div>
<div class="t" style="left:259.80px;top:610.0px;font-size:19px;line-height:19px;color:#2b2b2b;"><span style="position:absolute;left:0.27px;top:0;">6</span><span style="position:absolute;left:11.37px;top:0;">3</span></div>
<div class="t" style="left:588.40px;top:610.0px;font-size:19px;line-height:19px;color:#2b2b2b;"><span style="position:absolute;left:0.27px;top:0;">3</span></div>
<div class="t" style="left:931.00px;top:610.0px;font-size:19px;line-height:19px;color:#2b2b2b;"><span style="position:absolute;left:0.27px;top:0;">0</span><span style="position:absolute;left:11.37px;top:0;">6</span><span style="position:absolute;left:23.46px;top:0;">/</span><span style="position:absolute;left:30.27px;top:0;">2</span><span style="position:absolute;left:41.37px;top:0;">8</span><span style="position:absolute;left:53.46px;top:0;">/</span><span style="position:absolute;left:60.27px;top:0;">2</span><span style="position:absolute;left:71.37px;top:0;">0</span><span style="position:absolute;left:79.80px;top:0;transform:scaleX(0.65);transform-origin:5.55px 0;">1</span><span style="position:absolute;left:88.77px;top:0;">3</span></div>
<div class="t" style="left:1168.20px;top:610.0px;font-size:19px;line-height:19px;color:#2b2b2b;"><span style="position:absolute;left:0.27px;top:0;">3</span><span style="position:absolute;left:11.37px;top:0;">0</span><span style="position:absolute;left:22.47px;top:0;">0</span></div>
<div class="t" style="left:1221.80px;top:610.0px;font-size:19px;line-height:19px;color:#2b2b2b;"><span style="position:absolute;left:-0.48px;top:0;">7</span><span style="position:absolute;left:7.20px;top:0;transform:scaleX(0.65);transform-origin:5.55px 0;">1</span></div>
<div style="position:absolute;left:0px;top:642px;width:1449px;height:43px;background:#f2f2f2"></div>
<div style="position:absolute;left:0px;top:685px;width:1449px;height:1px;background:#e3e3e3"></div>
<div style="position:absolute;left:12px;top:654px;width:25px;height:25px;box-sizing:border-box;border:2px solid #a3a3a3;background:#fff"></div>
<div class="t" style="left:259.80px;top:654.0px;font-size:19px;line-height:19px;color:#2b2b2b;"><span style="position:absolute;left:0.27px;top:0;">6</span><span style="position:absolute;left:11.37px;top:0;">4</span></div>
<div class="t" style="left:588.40px;top:654.0px;font-size:19px;line-height:19px;color:#2b2b2b;"><span style="position:absolute;left:0.27px;top:0;">3</span></div>
<div class="t" style="left:931.00px;top:654.0px;font-size:19px;line-height:19px;color:#2b2b2b;"><span style="position:absolute;left:0.27px;top:0;">0</span><span style="position:absolute;left:11.37px;top:0;">5</span><span style="position:absolute;left:23.46px;top:0;">/</span><span style="position:absolute;left:30.27px;top:0;">0</span><span style="position:absolute;left:38.70px;top:0;transform:scaleX(0.65);transform-origin:5.55px 0;">1</span><span style="position:absolute;left:48.66px;top:0;">/</span><span style="position:absolute;left:55.47px;top:0;">2</span><span style="position:absolute;left:66.57px;top:0;">0</span><span style="position:absolute;left:75.00px;top:0;transform:scaleX(0.65);transform-origin:5.55px 0;">1</span><span style="position:absolute;left:83.97px;top:0;">3</span></div>
<div class="t" style="left:1174.50px;top:654.0px;font-size:19px;line-height:19px;color:#2b2b2b;"><span style="position:absolute;left:-2.40px;top:0;transform:scaleX(0.65);transform-origin:5.55px 0;">1</span><span style="position:absolute;left:5.82px;top:0;">7</span><span style="position:absolute;left:16.17px;top:0;">5</span></div>
<div class="t" style="left:1221.80px;top:654.0px;font-size:19px;line-height:19px;color:#2b2b2b;"><span style="position:absolute;left:-0.48px;top:0;">7</span><span style="position:absolute;left:9.87px;top:0;">2</span></div>
<div style="position:absolute;left:0px;top:686px;width:1449px;height:42px;background:#ffffff"></div>
<div style="position:absolute;left:0px;top:728px;width:1449px;height:1px;background:#e3e3e3"></div>
<div style="position:absolute;left:12px;top:697px;width:25px;height:25px;box-sizing:border-box;border:2px solid #a3a3a3;background:#fff"></div>
<div class="t" style="left:259.80px;top:697.5px;font-size:19px;line-height:19px;color:#2b2b2b;"><span style="position:absolute;left:0.27px;top:0;">6</span><span style="position:absolute;left:11.37px;top:0;">5</span></div>
<div class="t" style="left:588.40px;top:697.5px;font-size:19px;line-height:19px;color:#2b2b2b;"><span style="position:absolute;left:0.27px;top:0;">3</span></div>
<div class="t" style="left:931.00px;top:697.5px;font-size:19px;line-height:19px;color:#2b2b2b;"><span style="position:absolute;left:0.27px;top:0;">0</span><span style="position:absolute;left:11.37px;top:0;">6</span><span style="position:absolute;left:23.46px;top:0;">/</span><span style="position:absolute;left:30.27px;top:0;">0</span><span style="position:absolute;left:41.37px;top:0;">3</span><span style="position:absolute;left:53.46px;top:0;">/</span><span style="position:absolute;left:60.27px;top:0;">2</span><span style="position:absolute;left:71.37px;top:0;">0</span><span style="position:absolute;left:79.80px;top:0;transform:scaleX(0.65);transform-origin:5.55px 0;">1</span><span style="position:absolute;left:88.77px;top:0;">3</span></div>
<div class="t" style="left:1168.20px;top:697.5px;font-size:19px;line-height:19px;color:#2b2b2b;"><span style="position:absolute;left:0.27px;top:0;">2</span><span style="position:absolute;left:11.37px;top:0;">0</span><span style="position:absolute;left:22.47px;top:0;">0</span></div>
<div class="t" style="left:1221.80px;top:697.5px;font-size:19px;line-height:19px;color:#2b2b2b;"><span style="position:absolute;left:-0.48px;top:0;">7</span><span style="position:absolute;left:9.87px;top:0;">3</span></div>
<div style="position:absolute;left:0px;top:729px;width:1449px;height:43px;background:#f2f2f2"></div>
<div style="position:absolute;left:0px;top:772px;width:1449px;height:1px;background:#e3e3e3"></div>
<div style="position:absolute;left:12px;top:741px;width:25px;height:25px;box-sizing:border-box;border:2px solid #a3a3a3;background:#fff"></div>
<div class="t" style="left:259.80px;top:741.0px;font-size:19px;line-height:19px;color:#2b2b2b;"><span style="position:absolute;left:0.27px;top:0;">6</span><span style="position:absolute;left:11.37px;top:0;">6</span></div>
<div class="t" style="left:588.40px;top:741.0px;font-size:19px;line-height:19px;color:#2b2b2b;"><span style="position:absolute;left:0.27px;top:0;">3</span></div>
<div class="t" style="left:931.00px;top:741.0px;font-size:19px;line-height:19px;color:#2b2b2b;"><span style="position:absolute;left:0.27px;top:0;">0</span><span style="position:absolute;left:11.37px;top:0;">5</span><span style="position:absolute;left:23.46px;top:0;">/</span><span style="position:absolute;left:27.60px;top:0;transform:scaleX(0.65);transform-origin:5.55px 0;">1</span><span style="position:absolute;left:35.82px;top:0;">7</span><span style="position:absolute;left:47.16px;top:0;">/</span><span style="position:absolute;left:53.97px;top:0;">2</span><span style="position:absolute;left:65.07px;top:0;">0</span><span style="position:absolute;left:73.50px;top:0;transform:scaleX(0.65);transform-origin:5.55px 0;">1</span><span style="position:absolute;left:82.47px;top:0;">3</span></div>
<div class="t" style="left:1173.00px;top:741.0px;font-size:19px;line-height:19px;color:#2b2b2b;"><span style="position:absolute;left:0.27px;top:0;">6</span><span style="position:absolute;left:8.70px;top:0;transform:scaleX(0.65);transform-origin:5.55px 0;">1</span><span style="position:absolute;left:17.67px;top:0;">5</span></div>
<div class="t" style="left:1221.80px;top:741.0px;font-size:19px;line-height:19px;color:#2b2b2b;"><span style="position:absolute;left:-0.48px;top:0;">7</span><span style="position:absolute;left:9.87px;top:0;">4</span></div>
<div style="position:absolute;left:0px;top:773px;width:1449px;height:43px;background:#ffffff"></div>
<div style="position:absolute;left:0px;top:816px;width:1449px;height:1px;background:#e3e3e3"></div>
<div style="position:absolute;left:12px;top:785px;width:25px;height:25px;box-sizing:border-box;border:2px solid #a3a3a3;background:#fff"></div>
<div class="t" style="left:259.80px;top:785.0px;font-size:19px;line-height:19px;color:#2b2b2b;"><span style="position:absolute;left:0.27px;top:0;">6</span><span style="position:absolute;left:10.62px;top:0;">7</span></div>
<div class="t" style="left:588.40px;top:785.0px;font-size:19px;line-height:19px;color:#2b2b2b;"><span style="position:absolute;left:0.27px;top:0;">3</span></div>
<div class="t" style="left:931.00px;top:785.0px;font-size:19px;line-height:19px;color:#2b2b2b;"><span style="position:absolute;left:0.27px;top:0;">0</span><span style="position:absolute;left:11.37px;top:0;">5</span><span style="position:absolute;left:23.46px;top:0;">/</span><span style="position:absolute;left:30.27px;top:0;">3</span><span style="position:absolute;left:38.70px;top:0;transform:scaleX(0.65);transform-origin:5.55px 0;">1</span><span style="position:absolute;left:48.66px;top:0;">/</span><span style="position:absolute;left:55.47px;top:0;">2</span><span style="position:absolute;left:66.57px;top:0;">0</span><span style="position:absolute;left:75.00px;top:0;transform:scaleX(0.65);transform-origin:5.55px 0;">1</span><span style="position:absolute;left:83.97px;top:0;">3</span></div>
<div class="t" style="left:1168.20px;top:785.0px;font-size:19px;line-height:19px;color:#2b2b2b;"><span style="position:absolute;left:0.27px;top:0;">6</span><span style="position:absolute;left:11.37px;top:0;">0</span><span style="position:absolute;left:22.47px;top:0;">0</span></div>
<div class="t" style="left:1221.80px;top:785.0px;font-size:19px;line-height:19px;color:#2b2b2b;"><span style="position:absolute;left:-0.48px;top:0;">7</span><span style="position:absolute;left:9.87px;top:0;">5</span></div>
<div style="position:absolute;left:0px;top:817px;width:1449px;height:43px;background:#f2f2f2"></div>
<div style="position:absolute;left:0px;top:860px;width:1449px;height:1px;background:#e3e3e3"></div>
<div style="position:absolute;left:12px;top:829px;width:25px;height:25px;box-sizing:border-box;border:2px solid #a3a3a3;background:#fff"></div>
<div class="t" style="left:259.80px;top:829.0px;font-size:19px;line-height:19px;color:#2b2b2b;"><span style="position:absolute;left:0.27px;top:0;">6</span><span style="position:absolute;left:11.37px;top:0;">8</span></div>
<div class="t" style="left:588.40px;top:829.0px;font-size:19px;line-height:19px;color:#2b2b2b;"><span style="position:absolute;left:0.27px;top:0;">3</span></div>
<div class="t" style="left:931.00px;top:829.0px;font-size:19px;line-height:19px;color:#2b2b2b;"><span style="position:absolute;left:0.27px;top:0;">0</span><span style="position:absolute;left:11.37px;top:0;">6</span><span style="position:absolute;left:23.46px;top:0;">/</span><span style="position:absolute;left:30.27px;top:0;">0</span><span style="position:absolute;left:41.37px;top:0;">8</span><span style="position:absolute;left:53.46px;top:0;">/</span><span style="position:absolute;left:60.27px;top:0;">2</span><span style="position:absolute;left:71.37px;top:0;">0</span><span style="position:absolute;left:79.80px;top:0;transform:scaleX(0.65);transform-origin:5.55px 0;">1</span><span style="position:absolute;left:88.77px;top:0;">3</span></div>
<div class="t" style="left:1168.20px;top:829.0px;font-size:19px;line-height:19px;color:#2b2b2b;"><span style="position:absolute;left:0.27px;top:0;">2</span><span style="position:absolute;left:11.37px;top:0;">6</span><span style="position:absolute;left:22.47px;top:0;">5</span></div>
<div class="t" style="left:1221.80px;top:829.0px;font-size:19px;line-height:19px;color:#2b2b2b;"><span style="position:absolute;left:-0.48px;top:0;">7</span><span style="position:absolute;left:9.87px;top:0;">6</span></div>
<div style="position:absolute;left:0px;top:861px;width:1449px;height:39px;background:#ffffff"></div>
<div style="position:absolute;left:12px;top:872px;width:25px;height:25px;box-sizing:border-box;border:2px solid #a3a3a3;background:#fff"></div>
<div class="t" style="left:259.80px;top:872.5px;font-size:19px;line-height:19px;color:#2b2b2b;"><span style="position:absolute;left:0.27px;top:0;">6</span><span style="position:absolute;left:11.37px;top:0;">9</span></div>
<div class="t" style="left:588.40px;top:872.5px;font-size:19px;line-height:19px;color:#2b2b2b;"><span style="position:absolute;left:0.27px;top:0;">3</span></div>
<div class="t" style="left:931.00px;top:872.5px;font-size:19px;line-height:19px;color:#2b2b2b;"><span style="position:absolute;left:0.27px;top:0;">0</span><span style="position:absolute;left:11.37px;top:0;">6</span><span style="position:absolute;left:23.46px;top:0;">/</span><span style="position:absolute;left:27.60px;top:0;transform:scaleX(0.65);transform-origin:5.55px 0;">1</span><span style="position:absolute;left:36.57px;top:0;">5</span><span style="position:absolute;left:48.66px;top:0;">/</span><span style="position:absolute;left:55.47px;top:0;">2</span><span style="position:absolute;left:66.57px;top:0;">0</span><span style="position:absolute;left:75.00px;top:0;transform:scaleX(0.65);transform-origin:5.55px 0;">1</span><span style="position:absolute;left:83.97px;top:0;">3</span></div>
<div class="t" style="left:1168.20px;top:872.5px;font-size:19px;line-height:19px;color:#2b2b2b;"><span style="position:absolute;left:0.27px;top:0;">3</span><span style="position:absolute;left:11.37px;top:0;">0</span><span style="position:absolute;left:22.47px;top:0;">0</span></div>
<div class="t" style="left:1221.80px;top:872.5px;font-size:19px;line-height:19px;color:#2b2b2b;"><span style="position:absolute;left:-0.48px;top:0;">7</span><span style="position:absolute;left:9.12px;top:0;">7</span></div>
<div style="position:absolute;left:0px;top:860px;width:1917px;height:40px;background:linear-gradient(180deg,rgba(0,0,0,0) 0%,rgba(0,0,0,0.02) 40%,rgba(0,0,0,0.08) 80%,rgba(0,0,0,0.14) 100%)"></div>
<svg style="position:absolute;left:1904px;top:206px;" width="12" height="10" viewBox="0 0 12 10"><path d="M1 9 L5.5 2 L10 9 Z" fill="#888"/></svg>
<div style="position:absolute;left:1905px;top:220.5px;width:9px;height:500px;background:#8a8a8a;border-radius:4.5px"></div>
<div style="position:absolute;left:1874px;top:592px;width:44px;height:225px;background:#3b8a1c;border-radius:5px 0 0 5px"></div>
<div class="t" style="left:1894.5px;top:707px;width:0;height:0;"><div style="position:absolute;left:0;top:0;transform:translate(-50%,-50%) rotate(-90deg) scaleX(0.966);font-weight:bold;font-size:18px;line-height:18px;color:#fff;white-space:nowrap;">Quick Walkthroughs</div></div>
<div style="position:absolute;left:0px;top:900px;width:1918px;height:61px;background:#efefef"></div>
<div style="position:absolute;left:0px;top:961px;width:1918px;height:1px;background:#b7c4c8"></div>
<div style="position:absolute;left:0px;top:962px;width:1918px;height:2px;background:#d4ebf0"></div>
<div style="position:absolute;left:3px;top:906px;width:1909px;height:50px;background:#fff"></div>
<div style="position:absolute;left:3px;top:902px;width:248px;height:57px;box-sizing:border-box;border:5px solid #e8161e"></div>
<svg style="position:absolute;left:11px;top:922px;" width="22" height="22" viewBox="0 0 22 22"><path d="M10.5 2.5 V18.5 M2.8 10.5 H19" stroke="#333" stroke-width="1.2"/></svg>
<div class="t" style="left:45.00px;top:923.3px;font-size:19px;line-height:19px;color:#333;transform:scaleX(0.8861);">ADD A NEW DOCUMENT</div>
<svg style="position:absolute;left:260px;top:922px;" width="24" height="20" viewBox="0 0 24 20"><rect x="1.1" y="1.3" width="18.8" height="16" rx="2" fill="none" stroke="#333" stroke-width="1.15"/><path d="M1.1 6.5 H19.9 M10.5 6.5 V17.3" stroke="#333" stroke-width="1.15"/></svg>
<div class="t" style="left:294.60px;top:923px;font-size:19px;line-height:19px;color:#333;transform:scaleX(0.8410);">VIEW RELATED DOCUMENTS</div>
<svg style="position:absolute;left:538px;top:920px;" width="25" height="25" viewBox="0 0 25 25"><path d="M5.6 10.4 V5.6 Q5.6 3.4 7.8 3.4 H18 L19.8 5.2 V10.4" fill="none" stroke="#444" stroke-width="1.4"/><path d="M3 16.8 V13 Q3 10.3 5.7 10.3 H19.4 Q22.1 10.3 22.1 13 V16.8" fill="none" stroke="#555" stroke-width="1.4"/><rect x="5.6" y="15.6" width="14.2" height="6" rx="0.8" fill="none" stroke="#444" stroke-width="1.4"/><circle cx="19.4" cy="13" r="0.9" fill="#444"/></svg>
<div class="t" style="left:573.30px;top:923px;font-size:19px;line-height:19px;color:#333;transform:scaleX(0.8140);">PRINT</div>
<svg style="position:absolute;left:658px;top:920px;" width="24" height="22" viewBox="0 0 24 22"><circle cx="17" cy="6" r="2.3" fill="none" stroke="#333" stroke-width="1.2"/><circle cx="6.6" cy="11.2" r="2.3" fill="none" stroke="#333" stroke-width="1.2"/><circle cx="17" cy="16.2" r="2.3" fill="none" stroke="#333" stroke-width="1.2"/><path d="M8.7 10.1 L14.9 7.1 M8.7 12.3 L14.9 15.2" stroke="#333" stroke-width="1.2"/></svg>
<div class="t" style="left:687.20px;top:922px;font-size:19px;line-height:19px;color:#333;transform:scaleX(0.8464);">SHARE</div>
<svg style="position:absolute;left:747px;top:922px;" width="18" height="13" viewBox="0 0 18 13"><path d="M1 2 H16.5 L8.75 11.6 Z" fill="#333" stroke="#333" stroke-width="1" stroke-linejoin="round"/></svg>
<svg style="position:absolute;left:790px;top:920px;" width="20" height="24" viewBox="0 0 20 24"><path d="M10.4 4.3 V17.2 M4.3 11.3 L10.4 17.3 L16.4 11.3" fill="none" stroke="#333" stroke-width="1.15"/><path d="M3 20.5 H17.7" stroke="#333" stroke-width="1.5" stroke-linecap="round"/></svg>
<div class="t" style="left:823.50px;top:923px;font-size:19px;line-height:19px;color:#333;transform:scaleX(0.8893);">DOWNLOAD</div>
<svg style="position:absolute;left:938px;top:918px;" width="32" height="28" viewBox="0 0 32 28"><g fill="none" stroke="#444" stroke-width="1.3"><circle cx="5.7" cy="6.8" r="2"/><circle cx="18.2" cy="6.8" r="2"/><circle cx="5.7" cy="15.7" r="2"/><circle cx="18.2" cy="15.7" r="2"/><circle cx="25.7" cy="13" r="2"/><circle cx="13.3" cy="22" r="2"/><circle cx="25.7" cy="22" r="2"/><path d="M7.7 6.8 H16.2 M5.7 8.8 V13.7 M18.2 8.8 V13.7 M7.7 15.7 H16.2 M15.3 22 H23.7 M25.7 15 V20 M13.3 18.3 V20 M21.6 13 H23.7"/></g></svg>
<div class="t" style="left:977.00px;top:923px;font-size:19px;line-height:19px;color:#333;transform:scaleX(0.7960);">INTERRELATED</div>
<svg style="position:absolute;left:1108px;top:920px;" width="28" height="26" viewBox="0 0 28 26"><path d="M6.73 17.57 A9.25 9.25 0 1 0 6.23 8.06" fill="none" stroke="#999" stroke-width="1.3"/><path d="M4.4 4 V9.4 H9.9" fill="none" stroke="#999" stroke-width="1.3"/><path d="M13.5 7.9 V12.8 L17.3 15.7" fill="none" stroke="#999" stroke-width="1.3"/></svg>
<div class="t" style="left:1144.80px;top:923px;font-size:19px;line-height:19px;color:#999;transform:scaleX(0.8687);">DOWNLOAD WORKFLOW ITEM HISTORY</div>
<svg style="position:absolute;left:1486px;top:920px;" width="22" height="24" viewBox="0 0 22 24"><path d="M2.7 5.5 H20" stroke="#999" stroke-width="1.4"/><path d="M7.3 5.4 Q7.8 2.6 11.2 2.6 Q14.6 2.6 15 5.4" fill="none" stroke="#999" stroke-width="1.3"/><path d="M4.3 5.5 V19.2 Q4.3 21.9 7 21.9 H16.2 Q18.9 21.9 18.9 19.2 V5.5" fill="none" stroke="#999" stroke-width="1.3"/><path d="M7.4 9.3 V18.4 M11.4 9.3 V18.4 M15 9.3 V18.4" stroke="#aaa" stroke-width="1.3"/></svg>
<div class="t" style="left:1520.00px;top:923px;font-size:19px;line-height:19px;color:#999;transform:scaleX(0.7794);">DELETE</div>
</body></html>
